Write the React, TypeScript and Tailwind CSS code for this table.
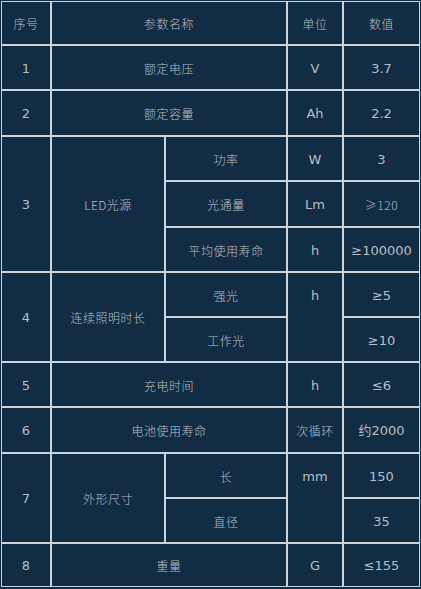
import React from 'react';

type Cell = {
    text: string;
    col: string;
    row: string;
    top?: boolean;
    latin?: boolean;
};

const CELLS: Cell[] = [
    { text: '序号', col: 'col-start-1', row: 'row-start-1' },
    { text: '参数名称', col: 'col-start-2 col-span-2', row: 'row-start-1' },
    { text: '单位', col: 'col-start-4', row: 'row-start-1' },
    { text: '数值', col: 'col-start-5', row: 'row-start-1' },

    { text: '1', col: 'col-start-1', row: 'row-start-2', latin: true },
    { text: '额定电压', col: 'col-start-2 col-span-2', row: 'row-start-2' },
    { text: 'V', col: 'col-start-4', row: 'row-start-2', latin: true },
    { text: '3.7', col: 'col-start-5', row: 'row-start-2', latin: true },

    { text: '2', col: 'col-start-1', row: 'row-start-3', latin: true },
    { text: '额定容量', col: 'col-start-2 col-span-2', row: 'row-start-3' },
    { text: 'Ah', col: 'col-start-4', row: 'row-start-3', latin: true },
    { text: '2.2', col: 'col-start-5', row: 'row-start-3', latin: true },

    { text: '3', col: 'col-start-1', row: 'row-start-4 row-span-3', latin: true },
    { text: 'LED光源', col: 'col-start-2', row: 'row-start-4 row-span-3' },
    { text: '功率', col: 'col-start-3', row: 'row-start-4' },
    { text: 'W', col: 'col-start-4', row: 'row-start-4', latin: true },
    { text: '3', col: 'col-start-5', row: 'row-start-4', latin: true },
    { text: '光通量', col: 'col-start-3', row: 'row-start-5' },
    { text: 'Lm', col: 'col-start-4', row: 'row-start-5', latin: true },
    { text: '≥120', col: 'col-start-5', row: 'row-start-5' },
    { text: '平均使用寿命', col: 'col-start-3', row: 'row-start-6' },
    { text: 'h', col: 'col-start-4', row: 'row-start-6', latin: true },
    { text: '≥100000', col: 'col-start-5', row: 'row-start-6', latin: true },

    { text: '4', col: 'col-start-1', row: 'row-start-7 row-span-2', latin: true },
    { text: '连续照明时长', col: 'col-start-2', row: 'row-start-7 row-span-2' },
    { text: '强光', col: 'col-start-3', row: 'row-start-7' },
    { text: 'h', col: 'col-start-4', row: 'row-start-7 row-span-2', latin: true, top: true },
    { text: '≥5', col: 'col-start-5', row: 'row-start-7', latin: true },
    { text: '工作光', col: 'col-start-3', row: 'row-start-8' },
    { text: '≥10', col: 'col-start-5', row: 'row-start-8', latin: true },

    { text: '5', col: 'col-start-1', row: 'row-start-9', latin: true },
    { text: '充电时间', col: 'col-start-2 col-span-2', row: 'row-start-9' },
    { text: 'h', col: 'col-start-4', row: 'row-start-9', latin: true },
    { text: '≤6', col: 'col-start-5', row: 'row-start-9', latin: true },

    { text: '6', col: 'col-start-1', row: 'row-start-10', latin: true },
    { text: '电池使用寿命', col: 'col-start-2 col-span-2', row: 'row-start-10' },
    { text: '次循环', col: 'col-start-4', row: 'row-start-10' },
    { text: '约2000', col: 'col-start-5', row: 'row-start-10', latin: true },

    { text: '7', col: 'col-start-1', row: 'row-start-11 row-span-2', latin: true },
    { text: '外形尺寸', col: 'col-start-2', row: 'row-start-11 row-span-2' },
    { text: '长', col: 'col-start-3', row: 'row-start-11' },
    { text: 'mm', col: 'col-start-4', row: 'row-start-11 row-span-2', latin: true, top: true },
    { text: '150', col: 'col-start-5', row: 'row-start-11', latin: true },
    { text: '直径', col: 'col-start-3', row: 'row-start-12' },
    { text: '35', col: 'col-start-5', row: 'row-start-12', latin: true },

    { text: '8', col: 'col-start-1', row: 'row-start-13', latin: true },
    { text: '重量', col: 'col-start-2 col-span-2', row: 'row-start-13' },
    { text: 'G', col: 'col-start-4', row: 'row-start-13', latin: true },
    { text: '≤155', col: 'col-start-5', row: 'row-start-13', latin: true },
];

export default function App() {
    return (
        <div className="w-[421px] h-[589px] bg-[#122c44] p-px">
            <div className="grid grid-cols-[48px_112px_120px_54px_75px] grid-rows-[42px_43px_44px_43px_44px_43px_43px_43px_43px_44px_43px_43px_42px] gap-[2px] p-px bg-[#ccd3d9] w-fit">
                {CELLS.map((c, i) => (
                    <div
                        key={i}
                        className={`${c.col} ${c.row} bg-[#122c44] text-[#b9bfc5] flex justify-center ${c.top ? 'items-start' : 'items-center pt-[2px]'} ${
                            c.latin
                                ? "font-['DejaVu_Sans','Noto_Sans_CJK_SC',sans-serif] text-[13px]"
                                : "font-['Noto_Sans_CJK_SC',sans-serif] text-[12px] font-light tracking-[0.5px]"
                        }`}
                    >
                        <div className={c.top ? 'h-[45px] flex items-center' : ''}>{c.text}</div>
                    </div>
                ))}
            </div>
        </div>
    );
}
